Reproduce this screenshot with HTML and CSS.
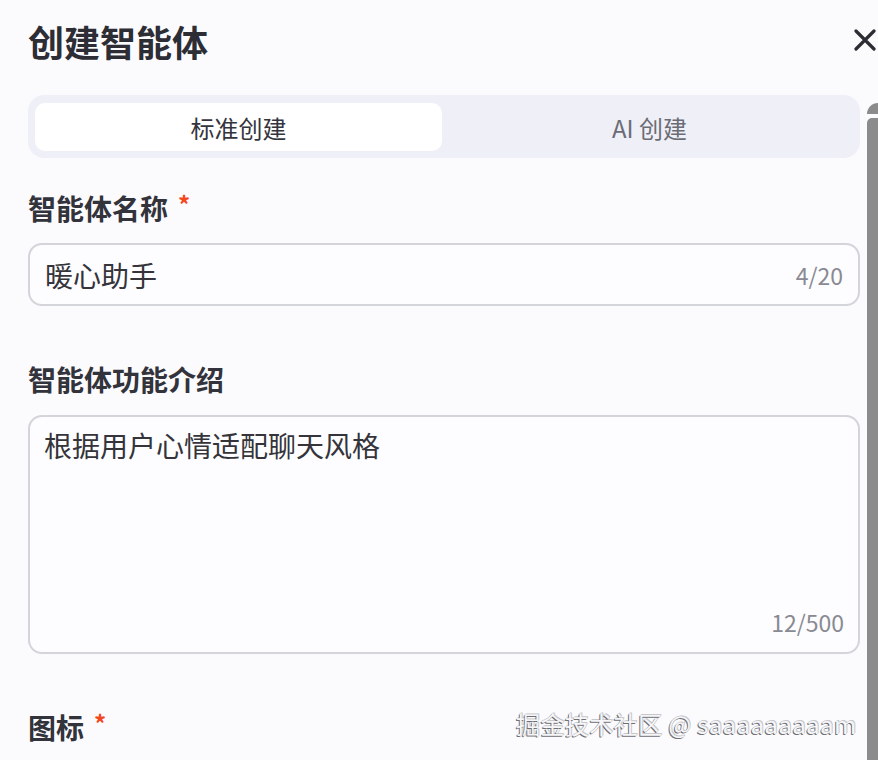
FILE: index.html
```html
<!DOCTYPE html>
<html lang="zh-CN">
<head>
<meta charset="utf-8">
<title>创建智能体</title>
<link rel="stylesheet" href="styles.css">
</head>
<body>
<div class="page">
  <header class="header">
    <h1 class="title">创建智能体</h1>
    <button class="close" aria-label="关闭">
      <svg width="22" height="22" viewBox="0 0 22 22"><path d="M2 2 L20 20 M20 2 L2 20" stroke="#2c2c34" stroke-width="3.2" stroke-linecap="round" fill="none"/></svg>
    </button>
  </header>

  <div class="tabs">
    <div class="tab active">标准创建</div>
    <div class="tab">AI 创建</div>
  </div>

  <div class="field first">
    <div class="label">智能体名称<span class="req">*</span></div>
    <div class="input">
      <span class="value">暖心助手</span>
      <span class="count">4/20</span>
    </div>
  </div>

  <div class="field">
    <div class="label">智能体功能介绍</div>
    <div class="textarea">
      <span class="value">根据用户心情适配聊天风格</span>
      <span class="count">12/500</span>
    </div>
  </div>

  <div class="field">
    <div class="label">图标<span class="req">*</span></div>
  </div>
</div>

<div class="scroll-cap"></div>
<div class="scroll-thumb"></div>
<div class="watermark">掘金技术社区 @ saaaaaaaaam</div>
</body>
</html>
```

FILE: styles.css
```css
html, body {
  margin: 0;
  padding: 0;
  background: #fbfbfe;
  height: 100%;
  overflow: hidden;
}

body {
  font-family: "Noto Sans CJK SC", "Noto Sans", sans-serif;
  color: #33333b;
}

.page {
  width: 832px;
  padding: 16px 0 0 28px;
  display: flex;
  flex-direction: column;
}

.header {
  display: flex;
  align-items: center;
  justify-content: space-between;
  height: 50px;
  margin-right: -16px;
}

.title {
  margin: 0;
  font-size: 36px;
  line-height: 50px;
  font-weight: 700;
  color: #2d2d35;
}

.close {
  border: 0;
  background: none;
  padding: 0;
  width: 22px;
  height: 22px;
  margin-top: -2px;
  display: flex;
}

.tabs {
  margin-top: 29px;
  height: 63px;
  box-sizing: border-box;
  padding: 8px 7px 7px 7px;
  background: #eff0f7;
  border-radius: 16px;
  display: grid;
  grid-template-columns: 1fr 1fr;
  gap: 4px;
}

.tab {
  display: flex;
  align-items: center;
  justify-content: center;
  font-size: 24px;
  color: #6c6c76;
  border-radius: 10px;
}

.tab.active {
  background: #ffffff;
  color: #34343c;
}

.field {
  display: flex;
  flex-direction: column;
  margin-top: 53px;
}

.field.first {
  margin-top: 30px;
}

.label {
  font-size: 28px;
  line-height: 40px;
  font-weight: 700;
  color: #33333b;
  display: flex;
  align-items: flex-start;
}

.req {
  color: #f4471d;
  font-size: 24px;
  line-height: 32px;
  margin-left: 10px;
}

.input {
  margin-top: 15px;
  height: 63px;
  box-sizing: border-box;
  border: 2px solid #d4d5db;
  border-radius: 14px;
  background: #fdfdff;
  display: flex;
  align-items: center;
  justify-content: space-between;
  padding: 0 15px 0 15px;
}

.value {
  font-size: 28px;
  line-height: 40px;
  color: #34343a;
}

.count {
  font-size: 23px;
  color: #8a8a93;
}

.textarea {
  margin-top: 16px;
  height: 239px;
  box-sizing: border-box;
  border: 2px solid #d4d5db;
  border-radius: 14px;
  background: #fdfdff;
  display: flex;
  flex-direction: column;
  justify-content: space-between;
  padding: 8px 14px 14px 14px;
}

.textarea .count {
  align-self: flex-end;
  line-height: 32px;
}

.scroll-cap {
  position: absolute;
  left: 867px;
  top: 103px;
  width: 11px;
  height: 11px;
  background: #8b8b8b;
  border-top-left-radius: 11px;
}

.scroll-thumb {
  position: absolute;
  left: 867px;
  top: 118px;
  width: 11px;
  bottom: 0;
  background: #8b8b8b;
  border-top-left-radius: 5px;
}

.watermark {
  position: absolute;
  left: 516px;
  top: 706px;
  font-size: 24px;
  letter-spacing: 0.4px;
  line-height: 36px;
  color: #f6f6f8;
  text-shadow: -1px 1px 0 #6f6f75, 1px -1px 0 #c8c8cc, 0 0 1px #8a8a90;
  white-space: nowrap;
}
```
